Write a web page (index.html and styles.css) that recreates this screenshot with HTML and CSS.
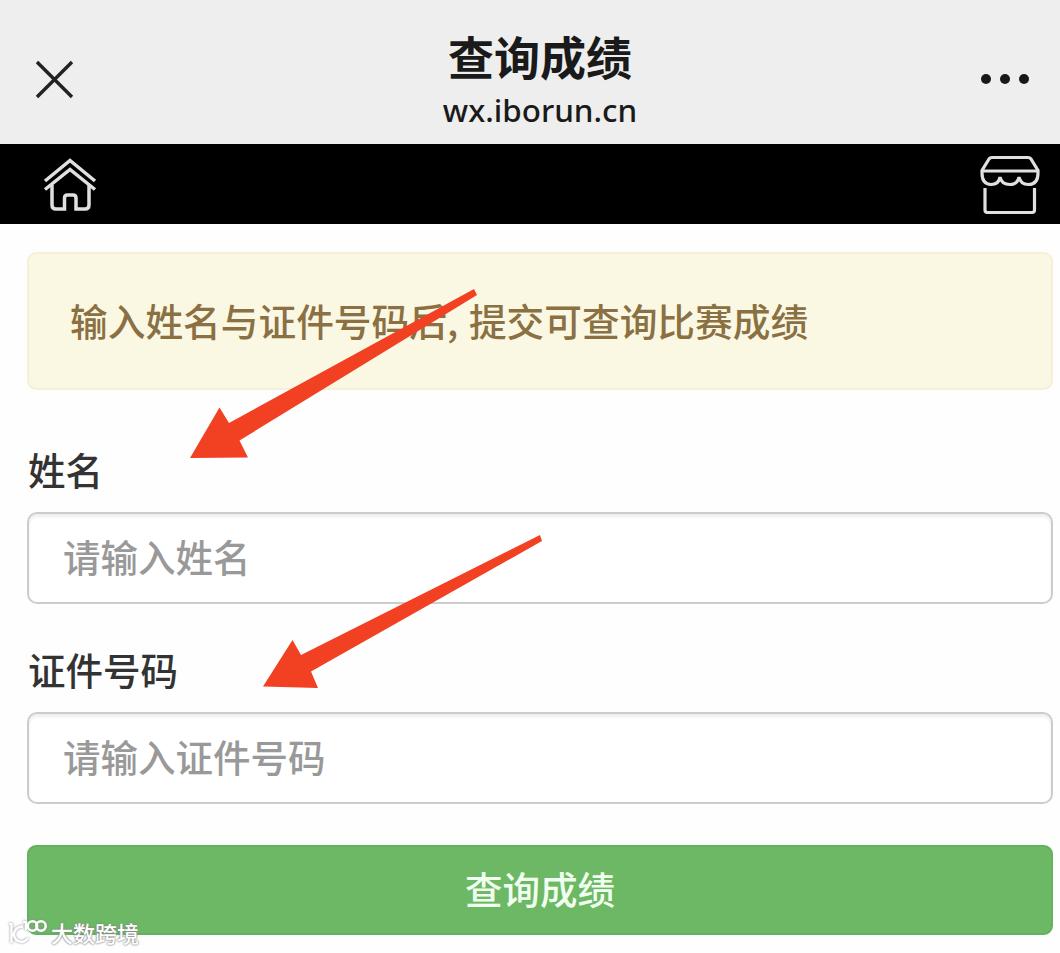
FILE: index.html
```html
<!DOCTYPE html>
<html lang="zh-CN">

<head>
    <meta charset="UTF-8">
    <meta name="viewport" content="width=device-width, initial-scale=1.0">
    <link rel="stylesheet" href="styles.css">
    <title>查询成绩</title>
</head>

<body>

    <header class="top-bar">
        <svg class="close" viewBox="0 0 40 40">
            <path d="M2 2L37 37M37 2L2 37" />
        </svg>
        <div class="page-info">
            <h1 class="page-title">查询成绩</h1>
            <p class="page-url">wx.iborun.cn</p>
        </div>
        <div class="more">
            <span class="dot"></span>
            <span class="dot"></span>
            <span class="dot"></span>
        </div>
    </header>

    <nav class="nav">
        <svg class="home-icon" viewBox="0 0 54 54">
            <path d="M2 23L27 2.500L52 23" />
            <path d="M2 31.500L27 11.500L52 31.500" />
            <path d="M9 27V47Q9 51 13 51H21.500V40Q21.500 37 24.500 37H30Q33 37 33 40V51H42Q46 51 46 47V27" />
        </svg>
        <svg class="shop-icon" viewBox="0 0 60 60">
            <path d="M12 2.500H48Q50 2.500 51 4L58 15.500V18Q58 29.500 48.500 29.500Q40.500 29.500 39 22Q37.500 29.500 30 29.500Q21.500 29.500 20 22Q19 29.500 11 29.500Q2 29.500 2 18V15.500L9 4Q10 2.500 12 2.500Z" />
            <path d="M3 16H57" />
            <path d="M5 33V55Q5 57.500 7.500 57.500H52Q54.500 57.500 54.500 55V33" />
        </svg>
    </nav>

    <main class="container">
        <div class="alert">输入姓名与证件号码后<span class="comma">,</span>提交可查询比赛成绩</div>

        <form class="search-form">
            <label class="label" for="name">姓名</label>
            <input id="name" class="input" type="text" placeholder="请输入姓名">

            <label class="label" for="card">证件号码</label>
            <input id="card" class="input" type="text" placeholder="请输入证件号码">

            <button class="submit" type="button">查询成绩</button>
        </form>
    </main>

    <!-- arrows pointing at the two fields -->
    <svg class="arrows" viewBox="0 0 1060 953">
        <path d="M474 289L477 295L239.500 440.500L248 457.500L190 458L219.500 407.500L229 423Z" />
        <path d="M540 535L542 541L311 671.500L318 688L263 686.500L292.500 640L301 655Z" />
    </svg>

    <div class="watermark">
        <svg class="watermark-logo" viewBox="0 0 40 28">
            <path d="M2 6H4.500V25M16 9A7.500 7.500 0 1 0 21 20" />
            <path d="M16 4H19V12" />
            <circle cx="25.500" cy="8" r="4.700" />
            <circle cx="34" cy="8" r="4.700" />
        </svg>
        <span>大数跨境</span>
    </div>

</body>

</html>
```
FILE: styles.css
```css
* {
    box-sizing: border-box;
}

body {
    margin: 0;
    padding: 0;
    height: 953px;
    position: relative;
    overflow: hidden;
    background-color: #fefefe;
    font-family: "Noto Sans CJK SC", sans-serif;
    font-weight: 500;
}

.top-bar {
    display: flex;
    justify-content: space-between;
    height: 144px;
    padding: 0 31px 0 35px;
    background-color: #eee;
    color: #1a1a1a;
}

.close {
    width: 40px;
    height: 40px;
    margin-top: 60px;
    fill: none;
    stroke: #222;
    stroke-width: 3.4;
}

.page-info {
    padding-top: 25px;
    margin-left: 24px;
    text-align: center;
}

.page-title {
    margin: 0;
    font-size: 46px;
    line-height: 60px;
    font-weight: 700;
}

.page-url {
    margin: 3px 0 0;
    font-family: "Noto Sans", sans-serif;
    font-size: 31.4px;
    line-height: 44px;
    font-weight: 500;
}

.more {
    display: flex;
    gap: 9px;
    padding-top: 74px;
}

.dot {
    width: 10px;
    height: 10px;
    border-radius: 50%;
    background-color: #181818;
}

.nav {
    display: flex;
    justify-content: space-between;
    height: 80px;
    padding: 11px 20px 0 43px;
    background-color: #000;
}

.home-icon,
.shop-icon {
    fill: none;
    stroke: #e0e0e0;
    stroke-width: 3.5;
}

.home-icon {
    width: 54px;
    height: 54px;
    margin-top: 3px;
}

.shop-icon {
    width: 60px;
    height: 60px;
    stroke-width: 3.2;
}

.container {
    padding: 28px 7px 0 27px;
}

.alert {
    height: 138px;
    padding: 0 41px;
    border: 2px solid #f8efd9;
    border-radius: 9px;
    background-color: #faf8e3;
    color: #8a7042;
    font-size: 37.7px;
    line-height: 131px;
}

.comma {
    display: inline-block;
    width: 22px;
}

.search-form {
    display: flex;
    flex-direction: column;
    padding-top: 51px;
}

.label {
    height: 56px;
    margin-bottom: 15px;
    padding-left: 1px;
    color: #333;
    font-size: 37.5px;
    line-height: 56px;
}

.input {
    height: 92px;
    margin-bottom: 37px;
    padding: 0 34px 5px;
    border: 2px solid #ccc;
    border-radius: 10px;
    background-color: #fff;
    box-shadow: inset 0 3px 3px rgba(0, 0, 0, 0.07);
    font-family: inherit;
    font-size: 37.5px;
    font-weight: 500;
}

.input::placeholder {
    color: #999;
    opacity: 1;
}

.submit {
    height: 90px;
    margin-top: 4px;
    padding: 0 0 6px;
    border: 2px solid #62b35d;
    border-radius: 9px;
    background-color: #6cb864;
    color: #f1fff0;
    font-family: inherit;
    font-size: 37.5px;
    font-weight: 500;
}

.arrows {
    position: absolute;
    top: 0;
    left: 0;
    width: 1060px;
    height: 953px;
    fill: #f24122;
    pointer-events: none;
}

.watermark {
    position: absolute;
    left: 7px;
    top: 918px;
    display: flex;
    gap: 4px;
    color: #fff;
    font-size: 22px;
    line-height: 29px;
    text-shadow: 0 0 2px #777, 0 0 2px #999;
}

.watermark-logo {
    width: 40px;
    height: 28px;
    overflow: visible;
    fill: none;
    stroke: #fff;
    stroke-width: 2.5;
    filter: drop-shadow(0 0 1px #888);
}
```
